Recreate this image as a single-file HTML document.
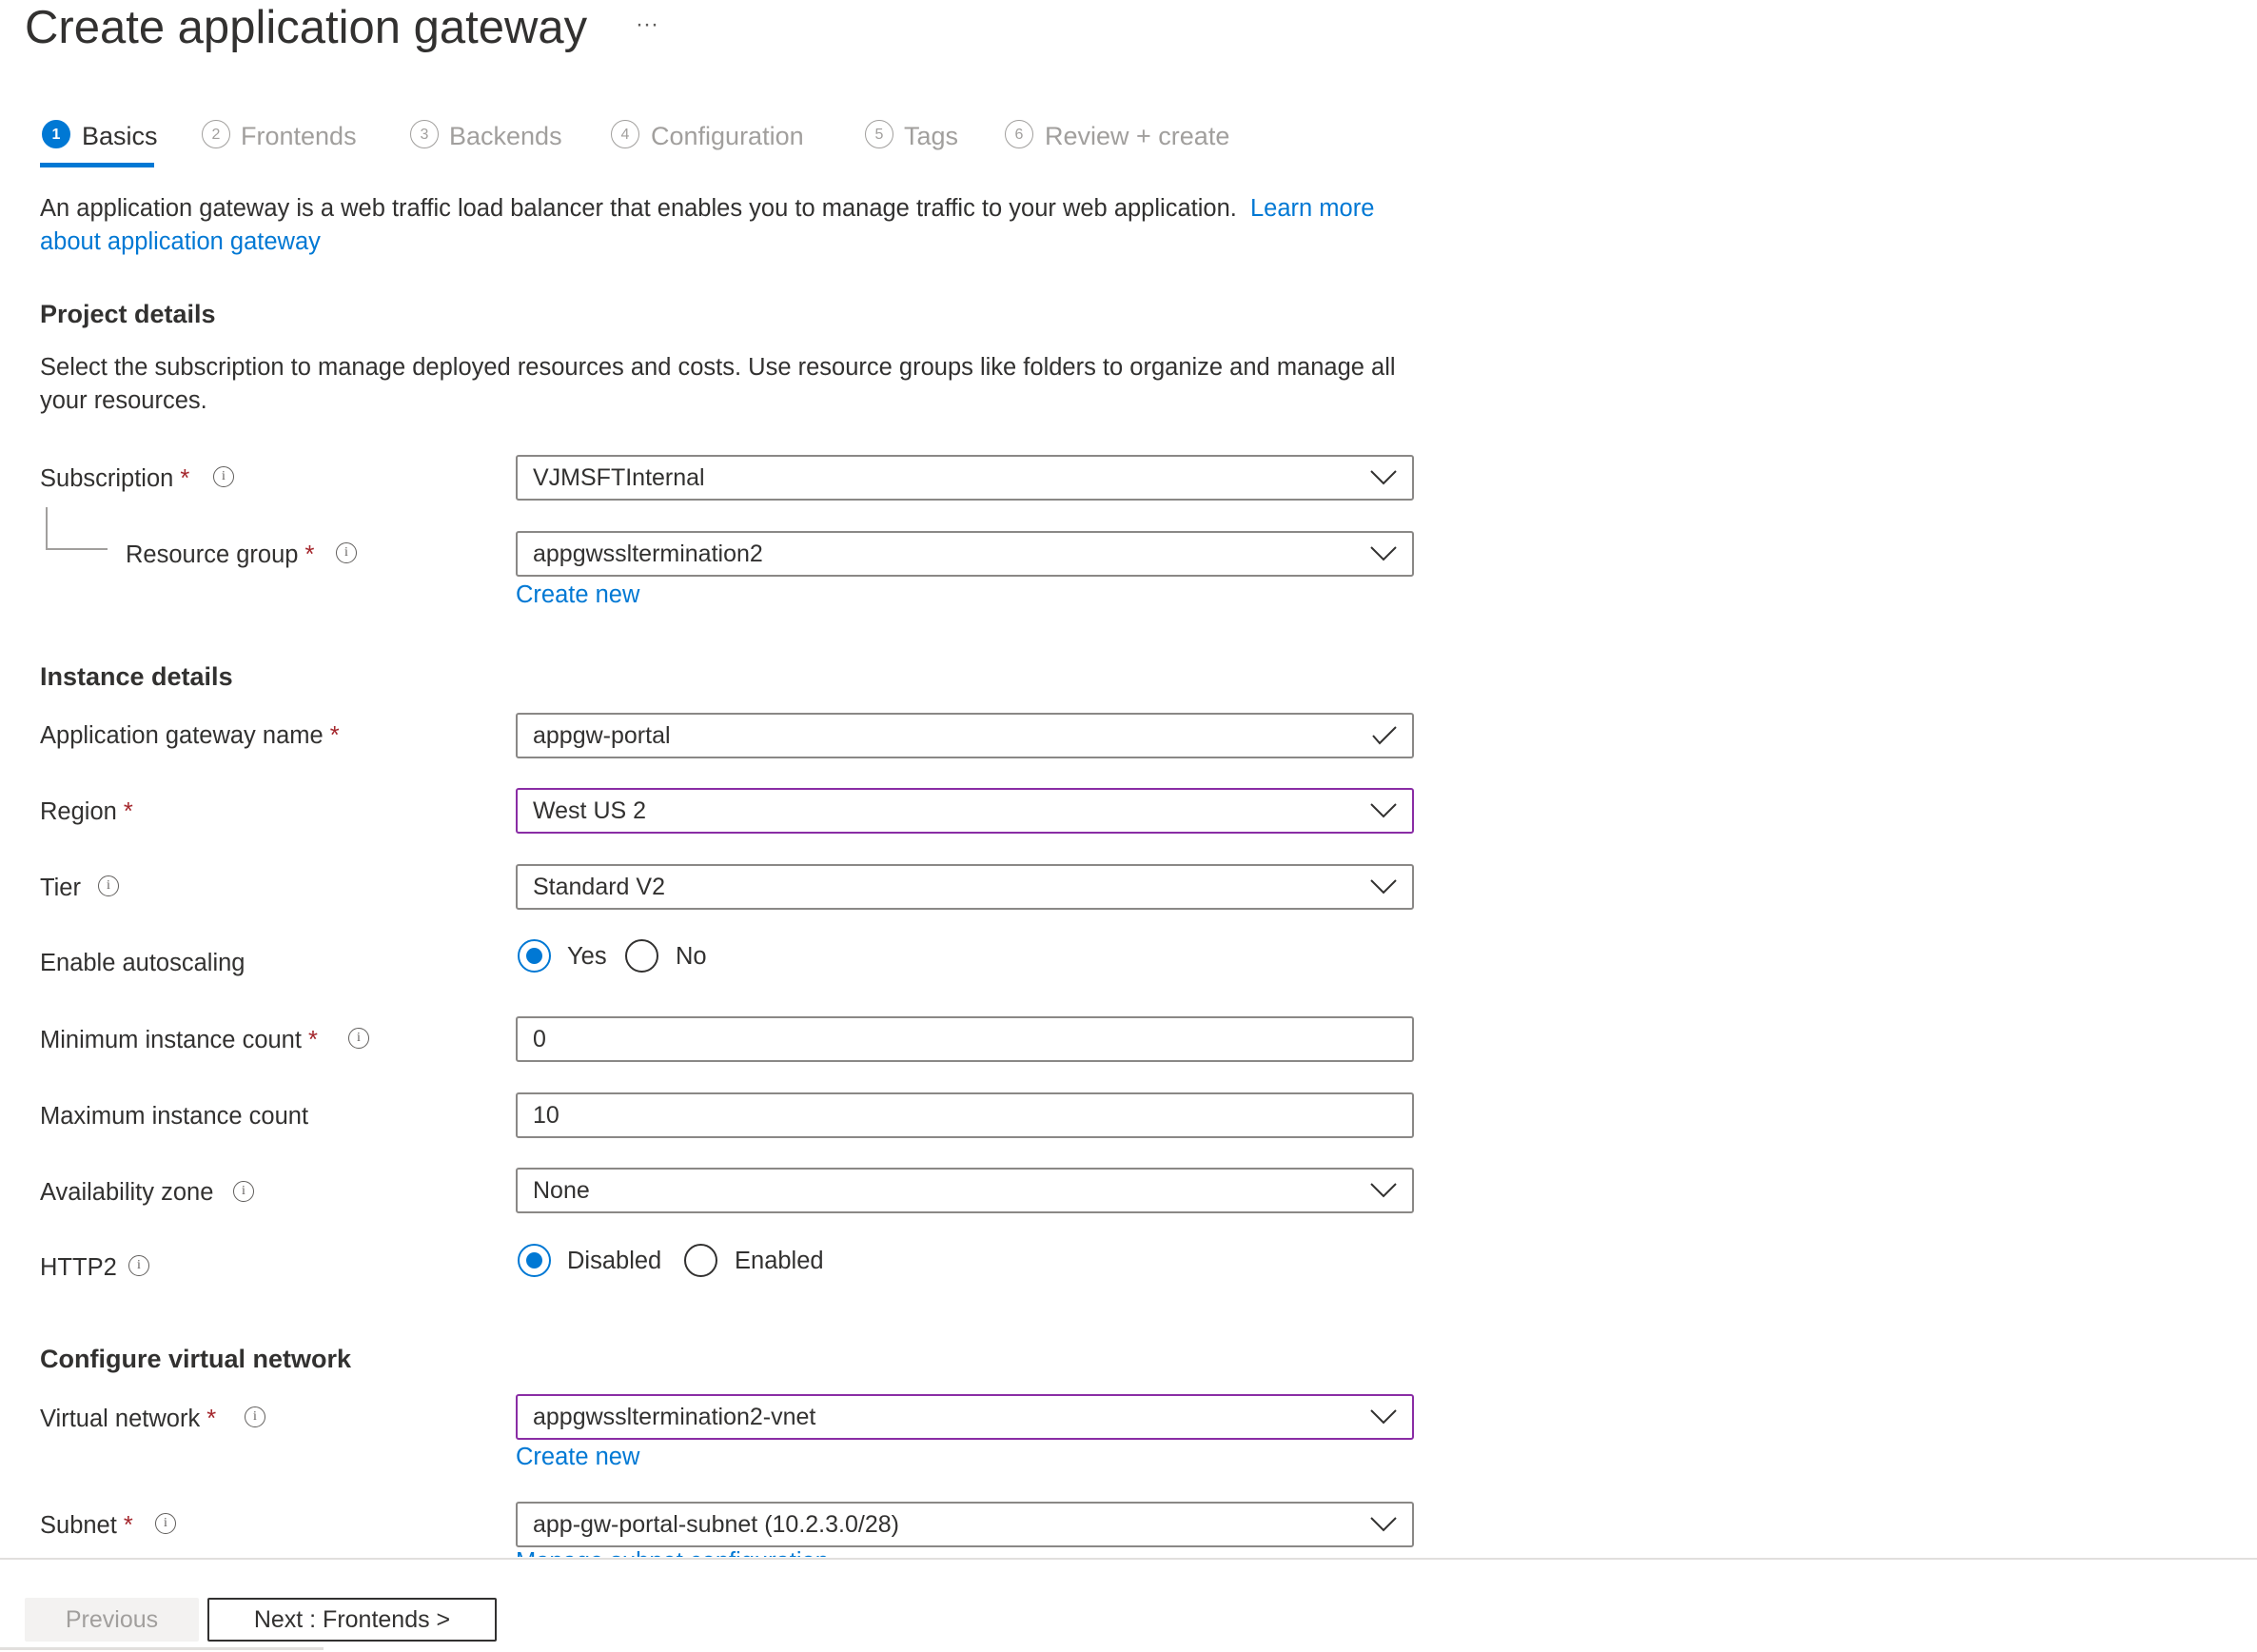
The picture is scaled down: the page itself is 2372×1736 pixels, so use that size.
<!DOCTYPE html>
<html><head><meta charset="utf-8"><style>
html,body{margin:0;padding:0;background:#fff;}
body{width:2372px;height:1734px;position:relative;overflow:hidden;font-family:"Liberation Sans",sans-serif;color:#323130;}
.a{position:absolute;white-space:nowrap;}
.t{font-size:25.5px;line-height:30px;}
.h{font-size:27px;font-weight:bold;line-height:34px;color:#323130;}
.link{color:#0078d4;}
.req{color:#a4262c;}
.box{position:absolute;left:542px;width:940px;height:44px;border:2px solid #8a8886;border-radius:3px;box-sizing:content-box;}
.box.p{border-color:#8a2da5;}
.box span{position:absolute;left:16px;top:7px;font-size:25px;line-height:30px;color:#323130;}
.chev{position:absolute;right:16px;top:14px;}
.info{position:absolute;width:20px;height:20px;border:1.5px solid #605e5c;border-radius:50%;font-size:14px;line-height:20px;text-align:center;color:#605e5c;font-family:"Liberation Serif",serif;}
.tabn{position:absolute;width:30px;height:30px;border:1.5px solid #a19f9d;border-radius:50%;font-size:16px;line-height:30px;text-align:center;color:#a19f9d;box-sizing:border-box;}
.tabt{position:absolute;font-size:27px;line-height:34px;color:#a19f9d;}
.radio{position:absolute;width:35px;height:35px;border:2px solid #323130;border-radius:50%;box-sizing:border-box;}
.radio.on{border-color:#0078d4;}
.radio.on::after{content:"";position:absolute;left:7px;top:7px;width:17px;height:17px;border-radius:50%;background:#0078d4;}
</style></head><body>

<div class="a" style="left:26px;top:1px;font-size:49px;line-height:56px;color:#323130;">Create application gateway</div>
<div class="a" style="left:668px;top:12px;font-size:24px;color:#605e5c;">···</div>

<div class="tabn" style="left:44px;top:126px;background:#0078d4;border-color:#0078d4;color:#fff;font-weight:bold;">1</div>
<div class="tabt" style="left:86px;top:126px;color:#323130;">Basics</div>
<div class="a" style="left:42px;top:171px;width:120px;height:5px;background:#0078d4;"></div>
<div class="tabn" style="left:212px;top:126px;">2</div><div class="tabt" style="left:253px;top:126px;">Frontends</div>
<div class="tabn" style="left:431px;top:126px;">3</div><div class="tabt" style="left:472px;top:126px;">Backends</div>
<div class="tabn" style="left:642px;top:126px;">4</div><div class="tabt" style="left:684px;top:126px;">Configuration</div>
<div class="tabn" style="left:909px;top:126px;">5</div><div class="tabt" style="left:950px;top:126px;">Tags</div>
<div class="tabn" style="left:1056px;top:126px;">6</div><div class="tabt" style="left:1098px;top:126px;">Review + create</div>

<div class="a t" style="left:42px;top:204px;">An application gateway is a web traffic load balancer that enables you to manage traffic to your web application.&nbsp; <span class="link">Learn more</span></div>
<div class="a t link" style="left:42px;top:239px;">about application gateway</div>

<div class="a h" style="left:42px;top:313px;">Project details</div>
<div class="a t" style="left:42px;top:371px;">Select the subscription to manage deployed resources and costs. Use resource groups like folders to organize and manage all</div>
<div class="a t" style="left:42px;top:406px;">your resources.</div>

<div class="a t" style="left:42px;top:488px;">Subscription <span class="req">*</span></div>
<div class="info" style="left:224px;top:490px;">i</div>
<div class="box" style="top:478px;"><span>VJMSFTInternal</span><svg class="chev" width="28" height="16"><path d="M1 1 L14 14 L27 1" fill="none" stroke="#323130" stroke-width="2"/></svg></div>

<div class="a" style="left:48px;top:533px;width:1.5px;height:44px;background:#a19f9d;"></div>
<div class="a" style="left:48px;top:576px;width:65px;height:1.5px;background:#a19f9d;"></div>
<div class="a t" style="left:132px;top:568px;">Resource group <span class="req">*</span></div>
<div class="info" style="left:353px;top:570px;">i</div>
<div class="box" style="top:558px;"><span>appgwssltermination2</span><svg class="chev" width="28" height="16"><path d="M1 1 L14 14 L27 1" fill="none" stroke="#323130" stroke-width="2"/></svg></div>
<div class="a t link" style="left:542px;top:610px;">Create new</div>

<div class="a h" style="left:42px;top:694px;">Instance details</div>

<div class="a t" style="left:42px;top:758px;">Application gateway name <span class="req">*</span></div>
<div class="box" style="top:749px;"><span>appgw-portal</span><svg class="chev" width="26" height="20" style="top:12px;"><path d="M1 10 L8 18 L25 1" fill="none" stroke="#323130" stroke-width="2"/></svg></div>

<div class="a t" style="left:42px;top:838px;">Region <span class="req">*</span></div>
<div class="box p" style="top:828px;"><span>West US 2</span><svg class="chev" width="28" height="16"><path d="M1 1 L14 14 L27 1" fill="none" stroke="#323130" stroke-width="2"/></svg></div>

<div class="a t" style="left:42px;top:918px;">Tier</div>
<div class="info" style="left:103px;top:920px;">i</div>
<div class="box" style="top:908px;"><span>Standard V2</span><svg class="chev" width="28" height="16"><path d="M1 1 L14 14 L27 1" fill="none" stroke="#323130" stroke-width="2"/></svg></div>

<div class="a t" style="left:42px;top:997px;">Enable autoscaling</div>
<div class="radio on" style="left:544px;top:987px;"></div>
<div class="a t" style="left:596px;top:990px;">Yes</div>
<div class="radio" style="left:657px;top:987px;"></div>
<div class="a t" style="left:710px;top:990px;">No</div>

<div class="a t" style="left:42px;top:1078px;">Minimum instance count <span class="req">*</span></div>
<div class="info" style="left:366px;top:1080px;">i</div>
<div class="box" style="top:1068px;"><span>0</span></div>

<div class="a t" style="left:42px;top:1158px;">Maximum instance count</div>
<div class="box" style="top:1148px;"><span>10</span></div>

<div class="a t" style="left:42px;top:1238px;">Availability zone</div>
<div class="info" style="left:245px;top:1241px;">i</div>
<div class="box" style="top:1227px;"><span>None</span><svg class="chev" width="28" height="16"><path d="M1 1 L14 14 L27 1" fill="none" stroke="#323130" stroke-width="2"/></svg></div>

<div class="a t" style="left:42px;top:1317px;">HTTP2</div>
<div class="info" style="left:135px;top:1319px;">i</div>
<div class="radio on" style="left:544px;top:1307px;"></div>
<div class="a t" style="left:596px;top:1310px;">Disabled</div>
<div class="radio" style="left:719px;top:1307px;"></div>
<div class="a t" style="left:772px;top:1310px;">Enabled</div>

<div class="a h" style="left:42px;top:1411px;">Configure virtual network</div>

<div class="a t" style="left:42px;top:1476px;">Virtual network <span class="req">*</span></div>
<div class="info" style="left:257px;top:1478px;">i</div>
<div class="box p" style="top:1465px;"><span>appgwssltermination2-vnet</span><svg class="chev" width="28" height="16"><path d="M1 1 L14 14 L27 1" fill="none" stroke="#323130" stroke-width="2"/></svg></div>
<div class="a t link" style="left:542px;top:1516px;">Create new</div>

<div class="a t" style="left:42px;top:1588px;">Subnet <span class="req">*</span></div>
<div class="info" style="left:163px;top:1590px;">i</div>
<div class="box" style="top:1578px;"><span>app-gw-portal-subnet (10.2.3.0/28)</span><svg class="chev" width="28" height="16"><path d="M1 1 L14 14 L27 1" fill="none" stroke="#323130" stroke-width="2"/></svg></div>
<div class="a t link" style="left:542px;top:1626px;height:10px;overflow:hidden;">Manage subnet configuration</div>

<div class="a" style="left:0;top:1637px;width:2372px;height:97px;background:#fff;border-top:2px solid #e1dfdd;"></div>
<div class="a" style="left:26px;top:1679px;width:183px;height:46px;background:#f3f2f1;border-radius:2px;font-size:25px;line-height:46px;text-align:center;color:#a19f9d;">Previous</div>
<div class="a" style="left:218px;top:1679px;width:304px;height:46px;border:2px solid #323130;border-radius:2px;box-sizing:border-box;font-size:25px;line-height:42px;text-align:center;color:#323130;">Next : Frontends &gt;</div>
<div class="a" style="left:0;top:1731px;width:340px;height:3px;background:#e1dfdd;"></div>
</body></html>
